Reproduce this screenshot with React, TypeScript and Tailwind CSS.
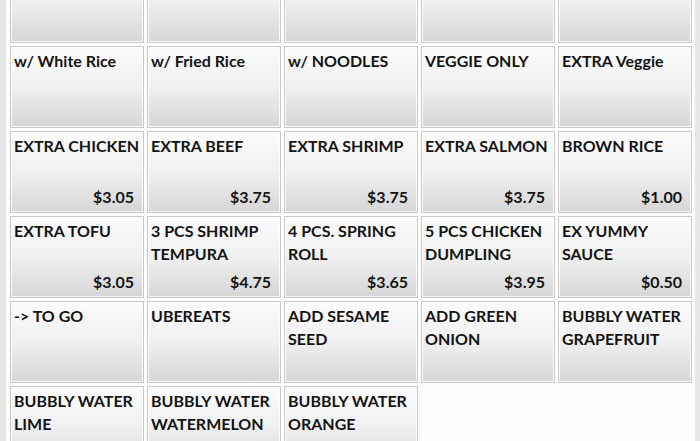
import React from "react";

type Item = { name: string; price?: string };

const items: (Item | null)[] = [
  { name: "" }, { name: "" }, { name: "" }, { name: "" }, { name: "" },
  { name: "w/ White Rice" }, { name: "w/ Fried Rice" }, { name: "w/ NOODLES" }, { name: "VEGGIE ONLY" }, { name: "EXTRA Veggie" },
  { name: "EXTRA CHICKEN", price: "$3.05" }, { name: "EXTRA BEEF", price: "$3.75" }, { name: "EXTRA SHRIMP", price: "$3.75" }, { name: "EXTRA SALMON", price: "$3.75" }, { name: "BROWN RICE", price: "$1.00" },
  { name: "EXTRA TOFU", price: "$3.05" }, { name: "3 PCS SHRIMP TEMPURA", price: "$4.75" }, { name: "4 PCS. SPRING ROLL", price: "$3.65" }, { name: "5 PCS CHICKEN DUMPLING", price: "$3.95" }, { name: "EX YUMMY SAUCE", price: "$0.50" },
  { name: "-> TO GO" }, { name: "UBEREATS" }, { name: "ADD SESAME SEED" }, { name: "ADD GREEN ONION" }, { name: "BUBBLY WATER GRAPEFRUIT" },
  { name: "BUBBLY WATER LIME" }, { name: "BUBBLY WATER WATERMELON" }, { name: "BUBBLY WATER ORANGE" }, null, null,
];

function Tile({ item }: { item: Item }) {
  return (
    <div className="relative h-[82px] border border-[#c9c9c9] bg-gradient-to-b from-[#fcfcfc] via-[#f0f0f0] to-[#d6d6d6] shadow-[inset_0_0_0_1px_rgba(255,255,255,0.8)] flex flex-col justify-between pl-[3px] pr-[1px] pt-[2px] pb-[4px]">
      <div className="text-[16px] leading-[23px] font-bold text-[#141414]">{item.name}</div>
      {item.price && (
        <div className="text-right pr-[8px] text-[16px] leading-[23px] font-bold text-[#141414]">{item.price}</div>
      )}
    </div>
  );
}

export default function App() {
  return (
    <div
      className="w-[700px] h-[441px] overflow-hidden bg-[#fdfdfd] flex"
      style={{ fontFamily: "Lato, 'Liberation Sans', sans-serif" }}
    >
      <div className="w-[6px] h-full bg-[#e6e6e6]" />
      <div className="flex-1 pl-[4px] pr-[3px]">
        <div className="grid grid-cols-5 gap-x-[3px] gap-y-[3px] -mt-[39px]">
          {items.map((it, i) =>
            it ? <Tile key={i} item={it} /> : <div key={i} className="h-[82px]" />
          )}
        </div>
      </div>
      <div className="w-[5px] h-full bg-[#e6e6e6]" />
    </div>
  );
}
